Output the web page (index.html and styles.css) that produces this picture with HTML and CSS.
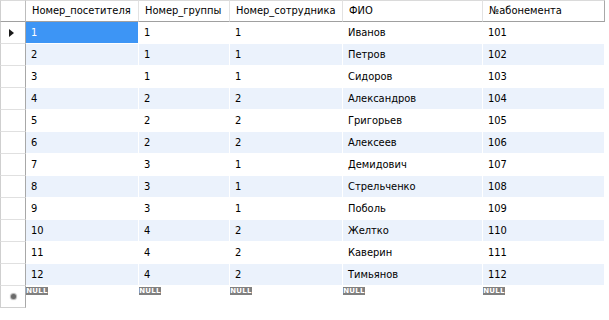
FILE: index.html
```html
<!DOCTYPE html>
<html>
<head>
<meta charset="utf-8">
<link rel="stylesheet" href="styles.css">
</head>
<body>
<div class="grid">
<table class="tbl">
<colgroup>
<col class="c0"><col class="c1"><col class="c2"><col class="c3"><col class="c4"><col class="c5">
</colgroup>
<thead>
<tr><th class="rh"></th><th>Номер_посетителя</th><th>Номер_группы</th><th>Номер_сотрудника</th><th>ФИО</th><th>№абонемента</th></tr>
</thead>
<tbody>
<tr class="odd"><td class="rh"><span class="arrow"></span></td><td class="sel">1</td><td>1</td><td>1</td><td>Иванов</td><td>101</td></tr>
<tr class="even"><td class="rh"></td><td>2</td><td>1</td><td>1</td><td>Петров</td><td>102</td></tr>
<tr class="odd"><td class="rh"></td><td>3</td><td>1</td><td>1</td><td>Сидоров</td><td>103</td></tr>
<tr class="even"><td class="rh"></td><td>4</td><td>2</td><td>2</td><td>Александров</td><td>104</td></tr>
<tr class="odd"><td class="rh"></td><td>5</td><td>2</td><td>2</td><td>Григорьев</td><td>105</td></tr>
<tr class="even"><td class="rh"></td><td>6</td><td>2</td><td>2</td><td>Алексеев</td><td>106</td></tr>
<tr class="odd"><td class="rh"></td><td>7</td><td>3</td><td>1</td><td>Демидович</td><td>107</td></tr>
<tr class="even"><td class="rh"></td><td>8</td><td>3</td><td>1</td><td>Стрельченко</td><td>108</td></tr>
<tr class="odd"><td class="rh"></td><td>9</td><td>3</td><td>1</td><td>Поболь</td><td>109</td></tr>
<tr class="even"><td class="rh"></td><td>10</td><td>4</td><td>2</td><td>Желтко</td><td>110</td></tr>
<tr class="odd"><td class="rh"></td><td>11</td><td>4</td><td>2</td><td>Каверин</td><td>111</td></tr>
<tr class="even"><td class="rh"></td><td>12</td><td>4</td><td>2</td><td>Тимьянов</td><td>112</td></tr>
<tr class="newrow"><td class="rh"><span class="star"></span></td><td><span class="null">NULL</span></td><td><span class="null">NULL</span></td><td><span class="null">NULL</span></td><td><span class="null">NULL</span></td><td><span class="null">NULL</span></td></tr>
</tbody>
</table>
</div>
</body>
</html>
```
FILE: styles.css
```css
html, body {
  margin: 0;
  padding: 0;
  background: #ffffff;
}
.grid {
  width: 605px;
  font-family: "DejaVu Sans Condensed", "DejaVu Sans", sans-serif;
  font-size: 11px;
  color: #000;
}
.tbl {
  border-collapse: separate;
  border-spacing: 0;
  table-layout: fixed;
  width: 605px;
}
.c0 { width: 26px; }
.c1 { width: 113px; }
.c2 { width: 91px; }
.c3 { width: 113px; }
.c4 { width: 140px; }
.c5 { width: 122px; }
th {
  height: 22px;
  padding: 0 0 0 6px;
  font-weight: normal;
  text-align: left;
  background: #ffffff;
  border-top: 1px solid #dadada;
  border-right: 1px solid #e2e2e2;
  border-bottom: 1px solid #a0a0a0;
  white-space: nowrap;
  overflow: hidden;
  box-sizing: border-box;
  line-height: 20px;
}
th:last-child {
  border-right: 1px solid #a8a8a8;
}
th.rh {
  border-left: 1px solid #cfcfcf;
  border-right: 1px solid #bdbdbd;
  padding: 0;
}
td {
  height: 22px;
  padding: 0 0 0 5px;
  box-sizing: border-box;
  border-right: 1px solid #ffffff;
  border-bottom: 1px solid #ffffff;
  white-space: nowrap;
  overflow: hidden;
  line-height: 21px;
  vertical-align: middle;
}
td.rh {
  padding: 0;
  background: #ffffff;
  border-left: 1px solid #cfcfcf;
  border-right: 1px solid #a8a8a8;
  border-bottom: 1px solid #e0e0e0;
}
.even td { background: #ebf2fc; }
.even td.rh { background: #ffffff; }
td.sel {
  background: #3d95f5;
  color: #ffffff;
}
.arrow {
  display: block;
  margin: 0 0 0 8px;
  width: 0;
  height: 0;
  border-top: 4px solid transparent;
  border-bottom: 4px solid transparent;
  border-left: 5px solid #1a1a1a;
}
.newrow td {
  vertical-align: top;
  line-height: 1;
  border-bottom: 0;
  padding-left: 0;
}
.newrow td.rh {
  vertical-align: middle;
  border-bottom: 1px solid #d0d0d0;
}
.star {
  display: block;
  margin: 0 0 0 10px;
  width: 5px;
  height: 5px;
  border-radius: 50%;
  background: #6a6a6a;
  box-shadow: 0 0 1px 1px #b0b0b0;
}
.null {
  display: block;
  margin: 1px 0 0 0;
  width: 22px;
  height: 8px;
  overflow: hidden;
  background: #808080;
  color: #ffffff;
  font-family: "DejaVu Sans", sans-serif;
  font-size: 7px;
  font-weight: bold;
  line-height: 9px;
  text-align: center;
  letter-spacing: 0.3px;
}
```
